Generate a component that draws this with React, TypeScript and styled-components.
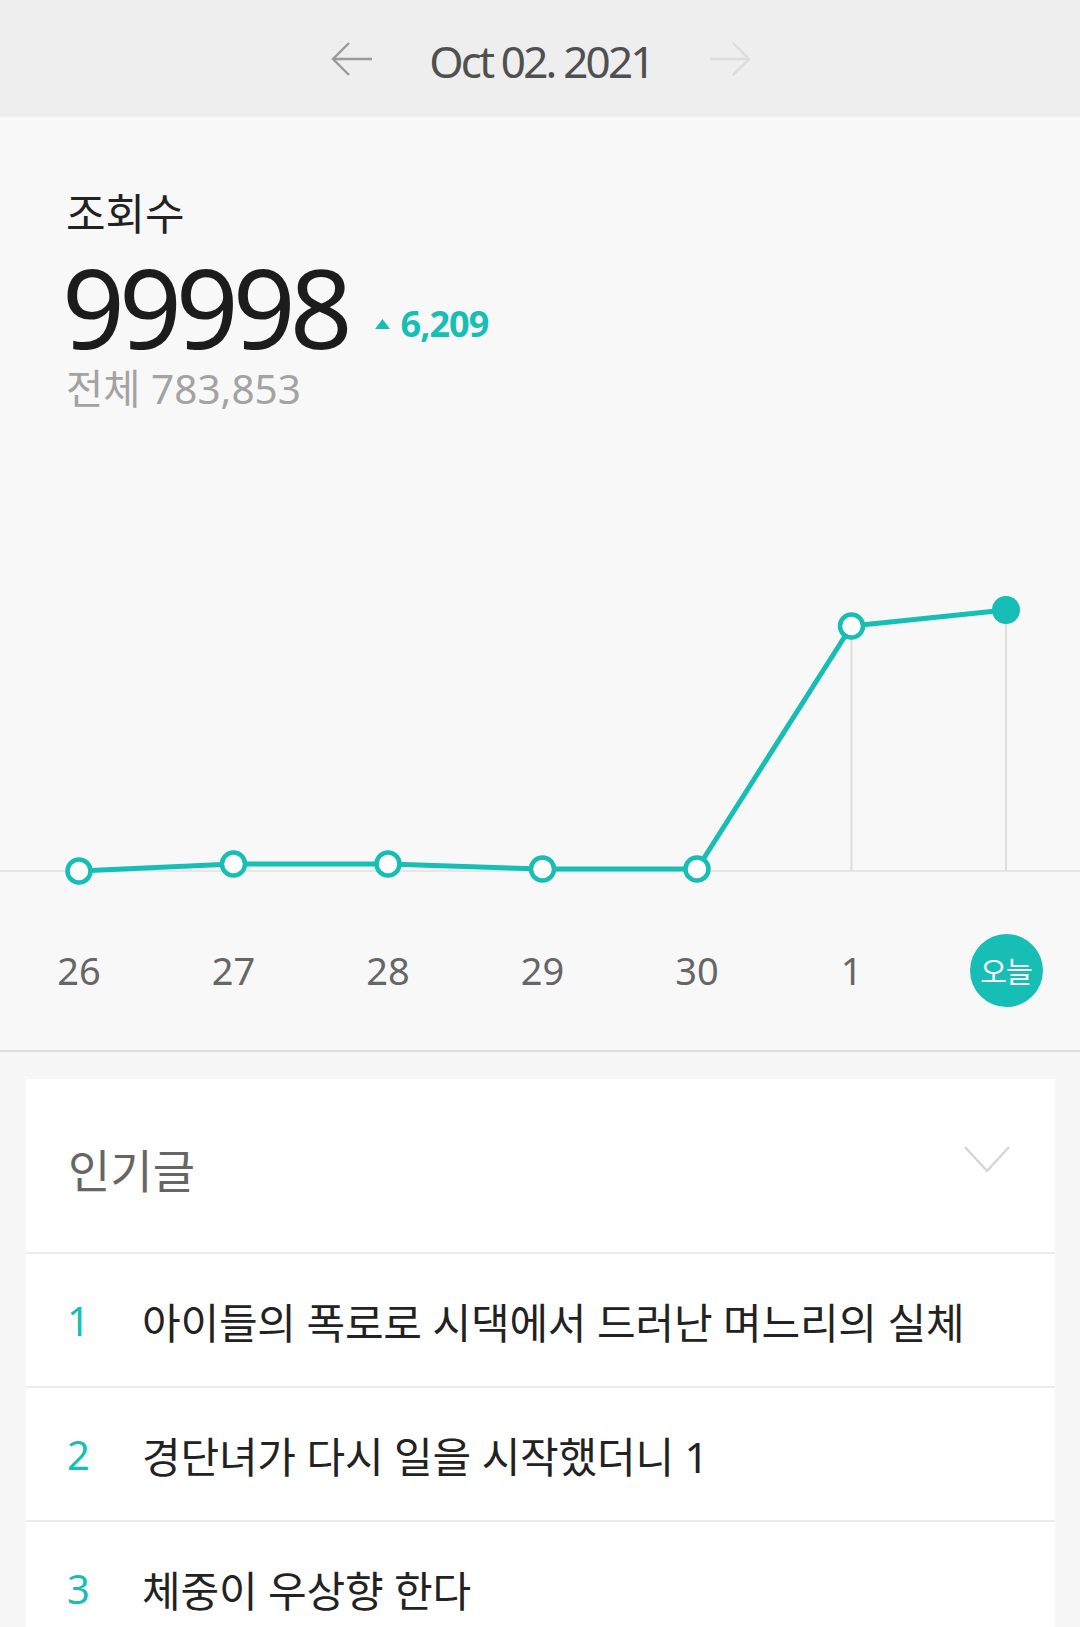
import React from 'react'
import styled, { createGlobalStyle } from 'styled-components'

const TEAL = '#17beb5'

const GlobalStyle = createGlobalStyle`
  html, body {
    margin: 0;
    padding: 0;
    background: #f7f7f7;
    overflow-x: hidden;
  }
  body {
    font-family: "Noto Sans", "Noto Sans CJK KR", sans-serif;
  }
`

const Header = styled.div`
  height: 117px;
  background: #eeeeee;
  display: flex;
  align-items: center;
  justify-content: center;
  gap: 56px;
  padding-left: 2px;
`

const DateText = styled.div`
  font-size: 44px;
  letter-spacing: -2.8px;
  color: #505050;
  line-height: 1;
  margin-top: 4px;
`

const ArrowButton = styled.div<{ $disabled?: boolean }>`
  width: 42px;
  height: 36px;
  display: flex;
  align-items: center;
  color: ${({ $disabled }) => ($disabled ? '#dcdcdc' : '#9a9a9a')};
`

const Panel = styled.div`
  background: #f8f8f8;
  border-bottom: 2px solid #dedede;
  overflow: hidden;
`

const Stats = styled.div`
  padding: 72px 0 0 66px;
`

const Label = styled.div`
  font-size: 43px;
  line-height: 50px;
  color: #222;
`

const CountRow = styled.div`
  display: flex;
  align-items: flex-start;
  margin-top: 12px;
`

const BigCount = styled.div`
  font-size: 110px;
  line-height: 1;
  letter-spacing: -6px;
  color: #1c1c1c;
  margin-left: -4px;
`

const Delta = styled.div`
  display: flex;
  align-items: center;
  gap: 11px;
  margin: 55px 0 0 28px;
  font-size: 36px;
  line-height: 1;
  font-weight: 700;
  letter-spacing: -1px;
  color: ${TEAL};
`

const Total = styled.div`
  font-size: 40.5px;
  line-height: 48px;
  color: #a3a3a3;
  margin-top: 4px;
`

const Chart = styled.svg`
  display: block;
  width: 1080px;
  height: 477px;
`

const Axis = styled.div`
  display: grid;
  grid-template-columns: repeat(7, 154.5px);
  padding-left: 1.75px;
  height: 160px;
  align-items: center;
`

const Tick = styled.div`
  display: flex;
  justify-content: center;
  font-size: 38px;
  color: #666;
`

const Today = styled.div`
  width: 73px;
  height: 73px;
  border-radius: 50%;
  background: ${TEAL};
  color: #fff;
  font-size: 29px;
  display: flex;
  align-items: center;
  justify-content: center;
  letter-spacing: -1px;
`

const Card = styled.div`
  background: #fff;
  margin: 27px 25px 0 26px;
`

const CardHeader = styled.div`
  height: 173px;
  display: flex;
  align-items: center;
  justify-content: space-between;
  padding: 0 44px 0 42px;
`

const CardTitle = styled.div`
  font-size: 46px;
  color: #666;
  margin-top: 4px;
`

const Chevron = styled.div`
  width: 48px;
  height: 28px;
  margin-bottom: 14px;
  color: #d6d6d6;
`

const Row = styled.div`
  height: 132px;
  border-top: 2px solid #ececec;
  display: flex;
  align-items: center;
  padding-left: 41px;
`

const Rank = styled.div`
  width: 75px;
  font-size: 40px;
  color: ${TEAL};
`

const PostTitle = styled.div`
  font-size: 42px;
  color: #222;
  letter-spacing: -0.2px;
`

const xs = [0, 1, 2, 3, 4, 5, 6].map((i) => 79 + i * 154.5)
const base = 458
const ys = [458, 451, 451, 456, 456, 213, 197]
const days = ['26', '27', '28', '29', '30', '1']
const posts = ['아이들의 폭로로 시댁에서 드러난 며느리의 실체', '경단녀가 다시 일을 시작했더니 1', '체중이 우상향 한다']

const ArrowIcon = ({ dir }: { dir: 'left' | 'right' }) => (
  <svg width="42" height="36" viewBox="0 0 42 36" fill="none" stroke="currentColor" strokeWidth="2.4">
    {dir === 'left' ? (
      <path d="M41 18H3M18 2L2 18l16 16" />
    ) : (
      <path d="M1 18h38M24 2l16 16-16 16" />
    )}
  </svg>
)

const App = () => {
  const line = xs.map((x, i) => `${x},${ys[i]}`).join(' ')

  return (
    <>
      <GlobalStyle />
      <Header>
        <ArrowButton>
          <ArrowIcon dir="left" />
        </ArrowButton>
        <DateText>Oct 02. 2021</DateText>
        <ArrowButton $disabled>
          <ArrowIcon dir="right" />
        </ArrowButton>
      </Header>

      <Panel>
        <Stats>
          <Label>조회수</Label>
          <CountRow>
            <BigCount>99998</BigCount>
            <Delta>
              <svg width="15" height="10" viewBox="0 0 15 10">
                <path d="M7.5 0L15 10H0z" fill={TEAL} />
              </svg>
              6,209
            </Delta>
          </CountRow>
          <Total>전체 783,853</Total>
        </Stats>

        <Chart viewBox="0 0 1080 477">
          <line x1="0" y1={base} x2="1080" y2={base} stroke="#e6e6e6" strokeWidth="2" />
          {[5, 6].map((i) => (
            <line key={i} x1={xs[i]} y1={ys[i]} x2={xs[i]} y2={base} stroke="#dddddd" strokeWidth="2" />
          ))}
          <polyline points={line} fill="none" stroke={TEAL} strokeWidth="5" strokeLinejoin="round" />
          {xs.slice(0, 6).map((x, i) => (
            <circle key={i} cx={x} cy={ys[i]} r="11.5" fill="#fff" stroke={TEAL} strokeWidth="4.5" />
          ))}
          <circle cx={xs[6]} cy={ys[6]} r="14" fill={TEAL} />
        </Chart>

        <Axis>
          {days.map((d) => (
            <Tick key={d}>{d}</Tick>
          ))}
          <Tick>
            <Today>오늘</Today>
          </Tick>
        </Axis>
      </Panel>

      <Card>
        <CardHeader>
          <CardTitle>인기글</CardTitle>
          <Chevron>
            <svg width="48" height="28" viewBox="0 0 48 28" fill="none" stroke="currentColor" strokeWidth="2.5">
              <path d="M2 2l22 24L46 2" />
            </svg>
          </Chevron>
        </CardHeader>
        {posts.map((title, i) => (
          <Row key={title}>
            <Rank>{i + 1}</Rank>
            <PostTitle>{title}</PostTitle>
          </Row>
        ))}
      </Card>
    </>
  )
}

export default App
